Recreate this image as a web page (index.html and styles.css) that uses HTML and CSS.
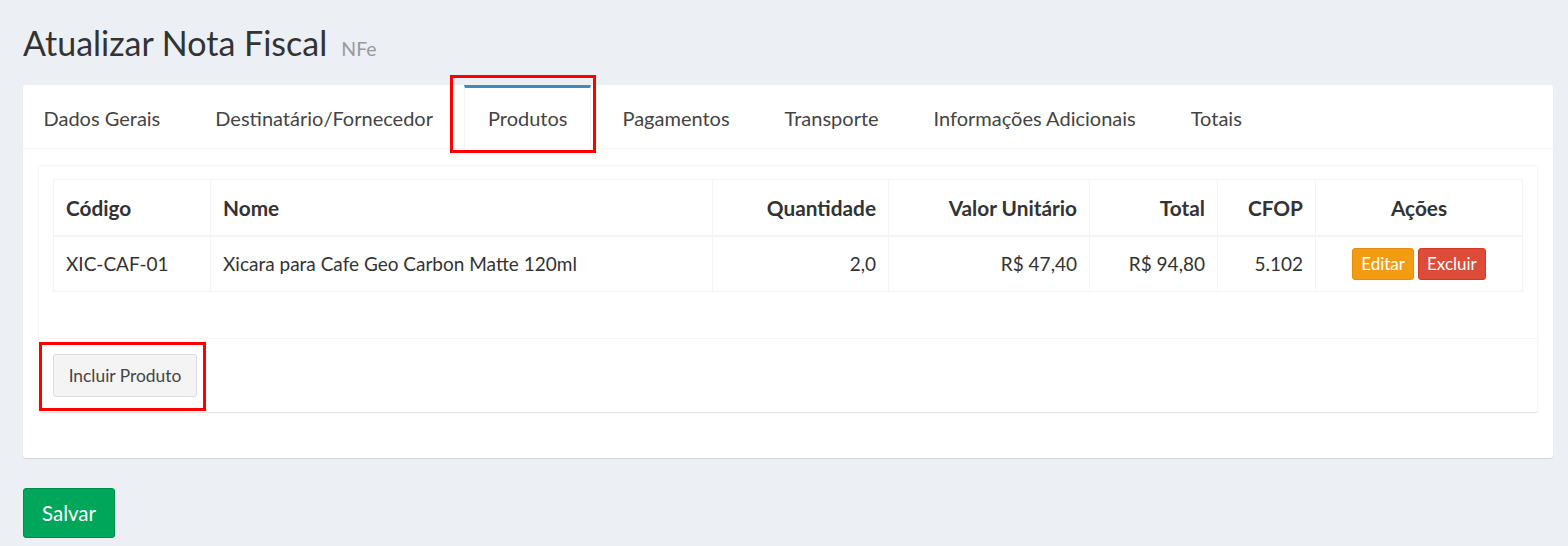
FILE: index.html
```html
<!DOCTYPE html>
<html lang="pt-BR">
<head>
<meta charset="utf-8">
<title>Atualizar Nota Fiscal</title>
<link rel="stylesheet" href="styles.css">
</head>
<body>
<div class="page">
  <h1 class="page-title">Atualizar Nota Fiscal<small class="subtitle">NFe</small></h1>

  <div class="card">
    <ul class="tabs">
      <li class="tab"><a>Dados Gerais</a></li>
      <li class="tab"><a>Destinatário/Fornecedor</a></li>
      <li class="tab active"><a>Produtos</a></li>
      <li class="tab"><a>Pagamentos</a></li>
      <li class="tab"><a>Transporte</a></li>
      <li class="tab"><a>Informações Adicionais</a></li>
      <li class="tab"><a>Totais</a></li>
    </ul>
    <div class="tab-content">
      <div class="box">
        <div class="box-body">
          <table class="grid">
            <colgroup>
              <col class="c-cod"><col class="c-nome"><col class="c-qtd"><col class="c-vu"><col class="c-tot"><col class="c-cfop"><col class="c-acoes">
            </colgroup>
            <thead>
              <tr>
                <th>Código</th>
                <th>Nome</th>
                <th class="num">Quantidade</th>
                <th class="num">Valor Unitário</th>
                <th class="num">Total</th>
                <th class="num">CFOP</th>
                <th class="center">Ações</th>
              </tr>
            </thead>
            <tbody>
              <tr>
                <td>XIC-CAF-01</td>
                <td>Xicara para Cafe Geo Carbon Matte 120ml</td>
                <td class="num">2,0</td>
                <td class="num">R$ 47,40</td>
                <td class="num">R$ 94,80</td>
                <td class="num">5.102</td>
                <td class="center"><span class="actions"><button class="btn-xs btn-warning">Editar</button><button class="btn-xs btn-danger">Excluir</button></span></td>
              </tr>
            </tbody>
          </table>
        </div>
        <div class="box-footer">
          <button class="btn-default">Incluir Produto</button>
        </div>
      </div>
    </div>
  </div>

  <button class="btn-success">Salvar</button>

  <div class="highlight hl-tab"></div>
  <div class="highlight hl-btn"></div>
</div>
</body>
</html>
```
FILE: styles.css
```css
* { box-sizing: border-box; }

html, body {
  margin: 0;
  padding: 0;
  background: #ecf0f5;
}

body {
  font-family: "Source Sans Pro", Lato, "Liberation Sans", sans-serif;
  color: #333;
}

.page {
  position: relative;
  padding: 19px 15px 0 23px;
  min-height: 546px;
}

.page-title {
  margin: 0 0 20px 0;
  font-size: 34px;
  line-height: 47px;
  font-weight: normal;
  color: #333;
  height: 46px;
}

.subtitle {
  font-size: 19.5px;
  color: #999;
  margin-left: 14px;
  font-weight: normal;
}

.card {
  background: #fff;
  border-radius: 3px;
  box-shadow: 0 1px 1px rgba(0, 0, 0, 0.12);
}

.tabs {
  list-style: none;
  margin: 0;
  padding: 0;
  display: flex;
  height: 64px;
  border-bottom: 1px solid #f4f4f4;
}

.tab {
  margin-right: 7px;
}

.tab:first-child {
  margin-left: -3.5px;
}

.tab a {
  display: block;
  border-top: 3px solid transparent;
  border-left: 1px solid transparent;
  border-right: 1px solid transparent;
  padding: 1px 23px 0 23px;
  line-height: 59px;
  font-size: 20px;
  color: #444;
  white-space: nowrap;
}

.tab.active a {
  border-top-color: #3c8dbc;
  border-left-color: #f4f4f4;
  border-right-color: #f4f4f4;
  background: #fff;
  height: 64px;
}

.tab-content {
  padding: 16px 15px 46px 15px;
}

.box {
  background: #fff;
  border-radius: 3px;
  box-shadow: 0 1px 1px rgba(0, 0, 0, 0.12);
  border: 1px solid #f7f7f7;
  border-bottom: none;
}

.box-body {
  padding: 13px 14px 46px 14px;
}

.grid {
  width: 100%;
  border-collapse: collapse;
  border: 1px solid #f4f4f4;
  font-size: 19px;
  table-layout: fixed;
}

.c-cod { width: 157px; }
.c-nome { width: 502px; }
.c-qtd { width: 176px; }
.c-vu { width: 201px; }
.c-tot { width: 128px; }
.c-cfop { width: 98px; }
.c-acoes { width: 207px; }

.grid th,
.grid td {
  border: 1px solid #f4f4f4;
  padding: 0 12px;
  height: 56px;
  text-align: left;
  vertical-align: middle;
  white-space: nowrap;
}

.grid th {
  font-weight: bold;
  font-size: 20.8px;
  border-bottom: 2px solid #f4f4f4;
}

.grid .num { text-align: right; }
.grid .center { text-align: center; }

.actions {
  display: inline-flex;
  gap: 4px;
  vertical-align: middle;
}

.btn-xs {
  font-family: inherit;
  font-size: 17px;
  height: 32px;
  padding: 0 8px;
  border-radius: 3px;
  color: #fff;
  border: 1px solid transparent;
  line-height: 30px;
}

.btn-warning { background: #f39c12; border-color: #e08e0b; }
.btn-danger { background: #dd4b39; border-color: #d73925; }

.box-footer {
  border-top: 1px solid #f4f4f4;
  padding: 15px 14px;
}

.btn-default {
  font-family: inherit;
  font-size: 17.4px;
  height: 43px;
  width: 144px;
  padding: 0;
  background: #f4f4f4;
  color: #444;
  border: 1px solid #ddd;
  border-radius: 3px;
  display: block;
}

.btn-success {
  font-family: inherit;
  display: block;
  margin-top: 30px;
  font-size: 20.5px;
  height: 50px;
  width: 92px;
  padding: 0;
  background: #00a65a;
  border: 1px solid #008d4c;
  color: #fff;
  border-radius: 3px;
}

.highlight {
  position: absolute;
  border: 3px solid #ff0000;
  pointer-events: none;
}

.hl-tab { left: 450px; top: 75px; width: 146px; height: 78px; }
.hl-btn { left: 39px; top: 342px; width: 167px; height: 69px; }
```
